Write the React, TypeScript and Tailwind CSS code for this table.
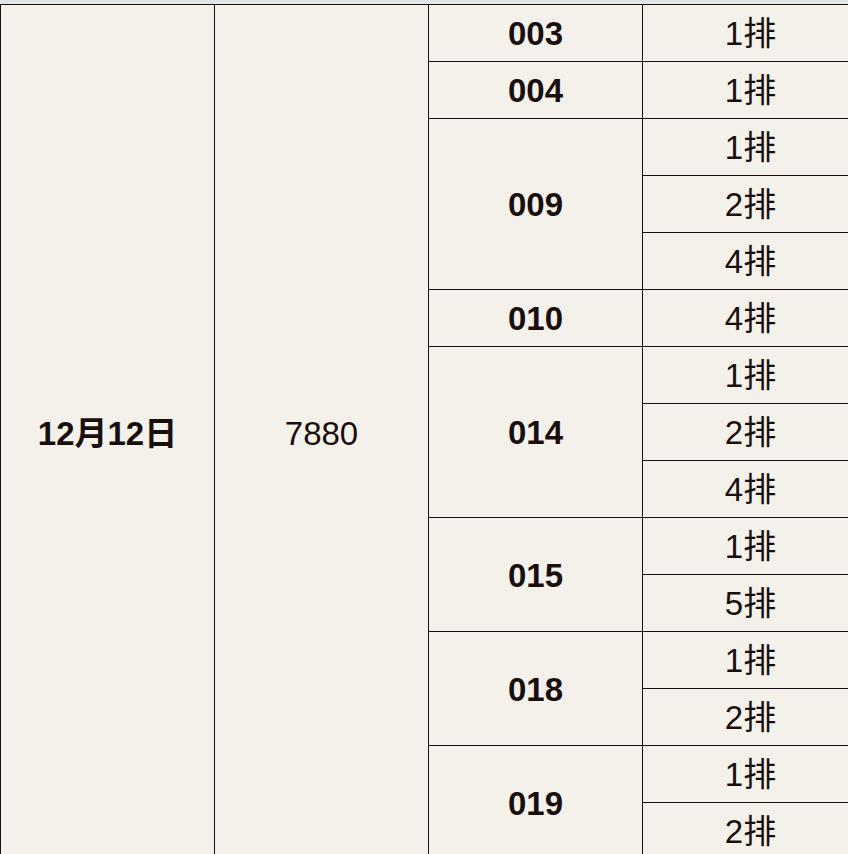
const groups: { code: string; rows: string[] }[] = [
  { code: '003', rows: ['1排'] },
  { code: '004', rows: ['1排'] },
  { code: '009', rows: ['1排', '2排', '4排'] },
  { code: '010', rows: ['4排'] },
  { code: '014', rows: ['1排', '2排', '4排'] },
  { code: '015', rows: ['1排', '5排'] },
  { code: '018', rows: ['1排', '2排'] },
  { code: '019', rows: ['1排', '2排'] },
];

const font = { fontFamily: '"Liberation Sans", Arial, "Noto Sans CJK SC", sans-serif' };

export default function App() {
  return (
    <div
      className="w-[848px] h-[854px] overflow-hidden bg-[#f4f1ea] text-[#1a0f0f] text-[33px]"
      style={font}
    >
      <div className="h-[4px] bg-[#e2e5e3]" />
      <div className="flex w-[858px] border-t border-l border-[#1a1010]">
        <div className="w-[214px] shrink-0 border-r border-[#1a1010] flex items-center justify-center pt-[3px] font-bold">
          12月12日
        </div>
        <div className="w-[214px] shrink-0 border-r border-[#1a1010] flex items-center justify-center pt-[3px]">
          7880
        </div>
        <div className="flex-1 flex flex-col">
          {groups.map((g) => (
            <div key={g.code} className="flex">
              <div className="w-[214px] shrink-0 border-r border-b border-[#1a1010] flex items-center justify-center pt-[2px] font-bold">
                {g.code}
              </div>
              <div className="flex-1 flex flex-col">
                {g.rows.map((r, i) => (
                  <div
                    key={i}
                    className="h-[57px] border-b border-[#1a1010] flex items-center justify-center pt-[2px]"
                  >
                    {r}
                  </div>
                ))}
              </div>
            </div>
          ))}
        </div>
      </div>
    </div>
  );
}
